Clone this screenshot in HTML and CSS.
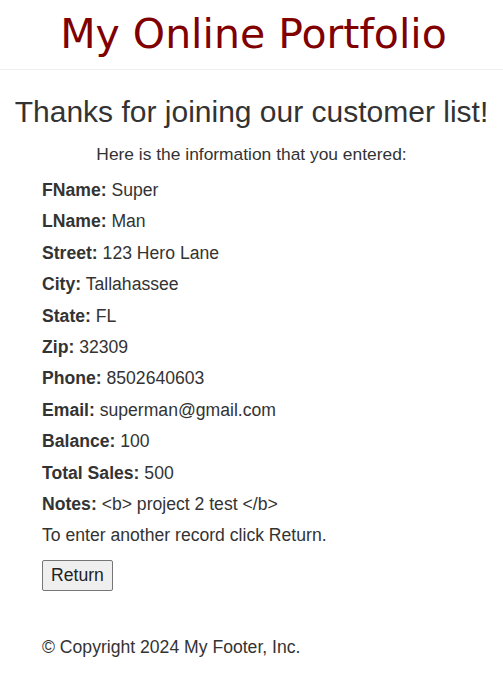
FILE: index.html
```html
<!DOCTYPE html>
<html>
<head>
<meta charset="utf-8">
<link rel="stylesheet" href="styles.css">
</head>
<body>
<header class="site-header">
  <div class="brand">My Online Portfolio</div>
</header>
<main class="content">
  <h1 class="title">Thanks for joining our customer list!</h1>
  <p class="intro">Here is the information that you entered:</p>
  <div class="details">
    <p class="row"><b>FName:</b> Super</p>
    <p class="row"><b>LName:</b> Man</p>
    <p class="row"><b>Street:</b> 123 Hero Lane</p>
    <p class="row"><b>City:</b> Tallahassee</p>
    <p class="row"><b>State:</b> FL</p>
    <p class="row"><b>Zip:</b> 32309</p>
    <p class="row"><b>Phone:</b> 8502640603</p>
    <p class="row"><b>Email:</b> superman@gmail.com</p>
    <p class="row"><b>Balance:</b> 100</p>
    <p class="row"><b>Total Sales:</b> 500</p>
    <p class="row"><b>Notes:</b> &lt;b&gt; project 2 test &lt;/b&gt;</p>
    <p class="row">To enter another record click Return.</p>
    <button class="btn" type="button">Return</button>
  </div>
</main>
<footer class="site-footer">&copy; Copyright 2024 My Footer, Inc.</footer>
</body>
</html>
```
FILE: styles.css
```css
html, body {
  margin: 0;
  padding: 0;
  background: #fff;
}
body {
  font-family: "Liberation Sans", Arial, sans-serif;
  font-size: 17.6px;
  color: #333;
}
.site-header {
  height: 69px;
  border-bottom: 1px solid #eee;
  display: flex;
  justify-content: center;
  align-items: center;
}
.brand {
  font-family: "DejaVu Sans", sans-serif;
  font-size: 41px;
  color: #800000;
  line-height: 1;
  margin-left: 4px;
}
.content {
  padding: 0 42px;
}
.title {
  margin: 24px -30px 0;
  text-align: center;
  font-weight: normal;
  font-size: 30px;
  line-height: 36px;
}
.intro {
  text-align: center;
  margin: 13px -20px 15px;
  line-height: 22px;
  font-size: 17.4px;
}
.row {
  margin: 0 0 10px;
  line-height: 21.4px;
}
.row b {
  font-weight: bold;
}
.btn {
  font-family: "Liberation Sans", Arial, sans-serif;
  font-size: 17.6px;
  color: #222;
  background: #efefef;
  border: 1px solid #767676;
  border-radius: 2px;
  padding: 3px 8px;
  height: 31px;
  margin-top: 3px;
}
.site-footer {
  padding: 45px 42px 0;
  line-height: 22px;
}
```
